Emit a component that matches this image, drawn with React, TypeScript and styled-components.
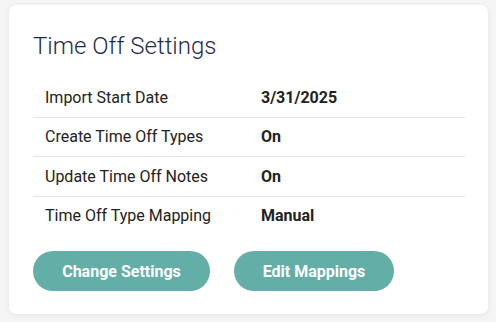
import { FunctionComponent } from "react";
import styled, { createGlobalStyle } from "styled-components";

const GlobalStyle = createGlobalStyle`
  html, body {
    margin: 0;
    padding: 0;
    background: #f5f5f5;
    font-family: Roboto, "Liberation Sans", sans-serif;
  }
`;

const Page = styled.div`
  width: 496px;
  height: 322px;
  padding: 5px 8px 8px 9px;
  box-sizing: border-box;
`;

const Card = styled.section`
  height: 100%;
  box-sizing: border-box;
  background: #ffffff;
  border-radius: 7px;
  box-shadow: 0 1px 6px rgba(0, 0, 0, 0.08);
  padding: 27px 23px 0 24px;
  display: flex;
  flex-direction: column;
`;

const Title = styled.h2`
  margin: 0 0 18px;
  font-size: 24px;
  line-height: 28px;
  font-weight: 300;
  color: #1f2b4d;
`;

const Table = styled.div`
  display: flex;
  flex-direction: column;
`;

const Row = styled.div<{ last?: boolean }>`
  display: grid;
  grid-template-columns: 228px 1fr;
  align-items: center;
  height: 38.5px;
  border-bottom: ${(p) => (p.last ? "none" : "1px solid #e3e3e3")};
  font-size: 16px;
  color: #222222;
`;

const Label = styled.div`
  padding-left: 12px;
`;

const Value = styled.div`
  font-weight: 700;
`;

const Actions = styled.div`
  display: flex;
  gap: 24px;
  margin-top: 16px;
`;

const Button = styled.button<{ w: number }>`
  width: ${(p) => p.w}px;
  height: 40px;
  border: none;
  border-radius: 20px;
  background: #63afa8;
  color: #ffffff;
  font-family: Roboto, "Liberation Sans", sans-serif;
  font-size: 16px;
  font-weight: 700;
  cursor: pointer;
`;

const settings = [
  { label: "Import Start Date", value: "3/31/2025" },
  { label: "Create Time Off Types", value: "On" },
  { label: "Update Time Off Notes", value: "On" },
  { label: "Time Off Type Mapping", value: "Manual" },
];

const App: FunctionComponent = () => {
  return (
    <>
      <GlobalStyle />
      <Page>
        <Card>
          <Title>Time Off Settings</Title>
          <Table>
            {settings.map((s, i) => (
              <Row key={s.label} last={i === settings.length - 1}>
                <Label>{s.label}</Label>
                <Value>{s.value}</Value>
              </Row>
            ))}
          </Table>
          <Actions>
            <Button w={177}>Change Settings</Button>
            <Button w={160}>Edit Mappings</Button>
          </Actions>
        </Card>
      </Page>
    </>
  );
};

export default App;
